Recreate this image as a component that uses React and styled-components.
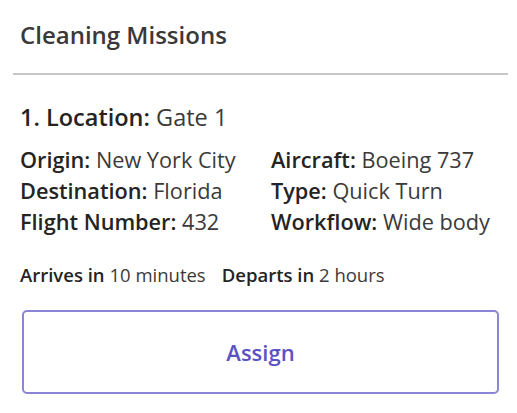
import React from "react";
import styled, { createGlobalStyle } from "styled-components";

const Global = createGlobalStyle`
  html, body {
    margin: 0;
    padding: 0;
    background: #fff;
  }
  body {
    font-family: "Open Sans", "Noto Sans", sans-serif;
    color: #252423;
  }
`;

const Card = styled.div`
  width: 517px;
  height: 413px;
  box-sizing: border-box;
  padding: 0 9px 0 13px;
`;

const Header = styled.div`
  height: 75px;
  box-sizing: border-box;
  padding: 20px 0 0 7px;
  border-bottom: 2px solid #c6c6c6;
  font-size: 24px;
  line-height: 30px;
  font-weight: 600;
  color: #3a3938;
`;

const Body = styled.div`
  padding: 27px 0 0 7px;
`;

const Location = styled.div`
  font-size: 23.5px;
  line-height: 30px;
  margin-bottom: 12px;
`;

const Label = styled.span`
  font-weight: 600;
  color: #252423;
`;

const Value = styled.span`
  font-weight: 400;
  color: #3b3a39;
`;

const Grid = styled.div`
  display: grid;
  grid-template-columns: 251px auto;
  font-size: 21.7px;
  line-height: 31px;
`;

const Times = styled.div`
  display: flex;
  gap: 16px;
  margin-top: 26px;
  font-size: 18.5px;
  line-height: 24px;
`;

const AssignButton = styled.button`
  display: block;
  width: 477px;
  height: 84px;
  margin: 23px 0 0 2px;
  background: #fff;
  border: 2px solid #8b84d7;
  border-radius: 5px;
  font-family: inherit;
  font-size: 22px;
  font-weight: 600;
  color: #5b52c4;
`;

const details = [
  ["Origin", "New York City"],
  ["Aircraft", "Boeing 737"],
  ["Destination", "Florida"],
  ["Type", "Quick Turn"],
  ["Flight Number", "432"],
  ["Workflow", "Wide body"]
];

const Field = ({ label, value }) => (
  <div>
    <Label>{label}:</Label> <Value>{value}</Value>
  </div>
);

export default function App() {
  return (
    <>
      <Global />
      <Card>
        <Header>Cleaning Missions</Header>
        <Body>
          <Location>
            <Label>1. Location:</Label> <Value>Gate 1</Value>
          </Location>
          <Grid>
            {details.map(([label, value]) => (
              <Field key={label} label={label} value={value} />
            ))}
          </Grid>
          <Times>
            <span>
              <Label>Arrives in</Label> <Value>10 minutes</Value>
            </span>
            <span>
              <Label>Departs in</Label> <Value>2 hours</Value>
            </span>
          </Times>
          <AssignButton>Assign</AssignButton>
        </Body>
      </Card>
    </>
  );
}
